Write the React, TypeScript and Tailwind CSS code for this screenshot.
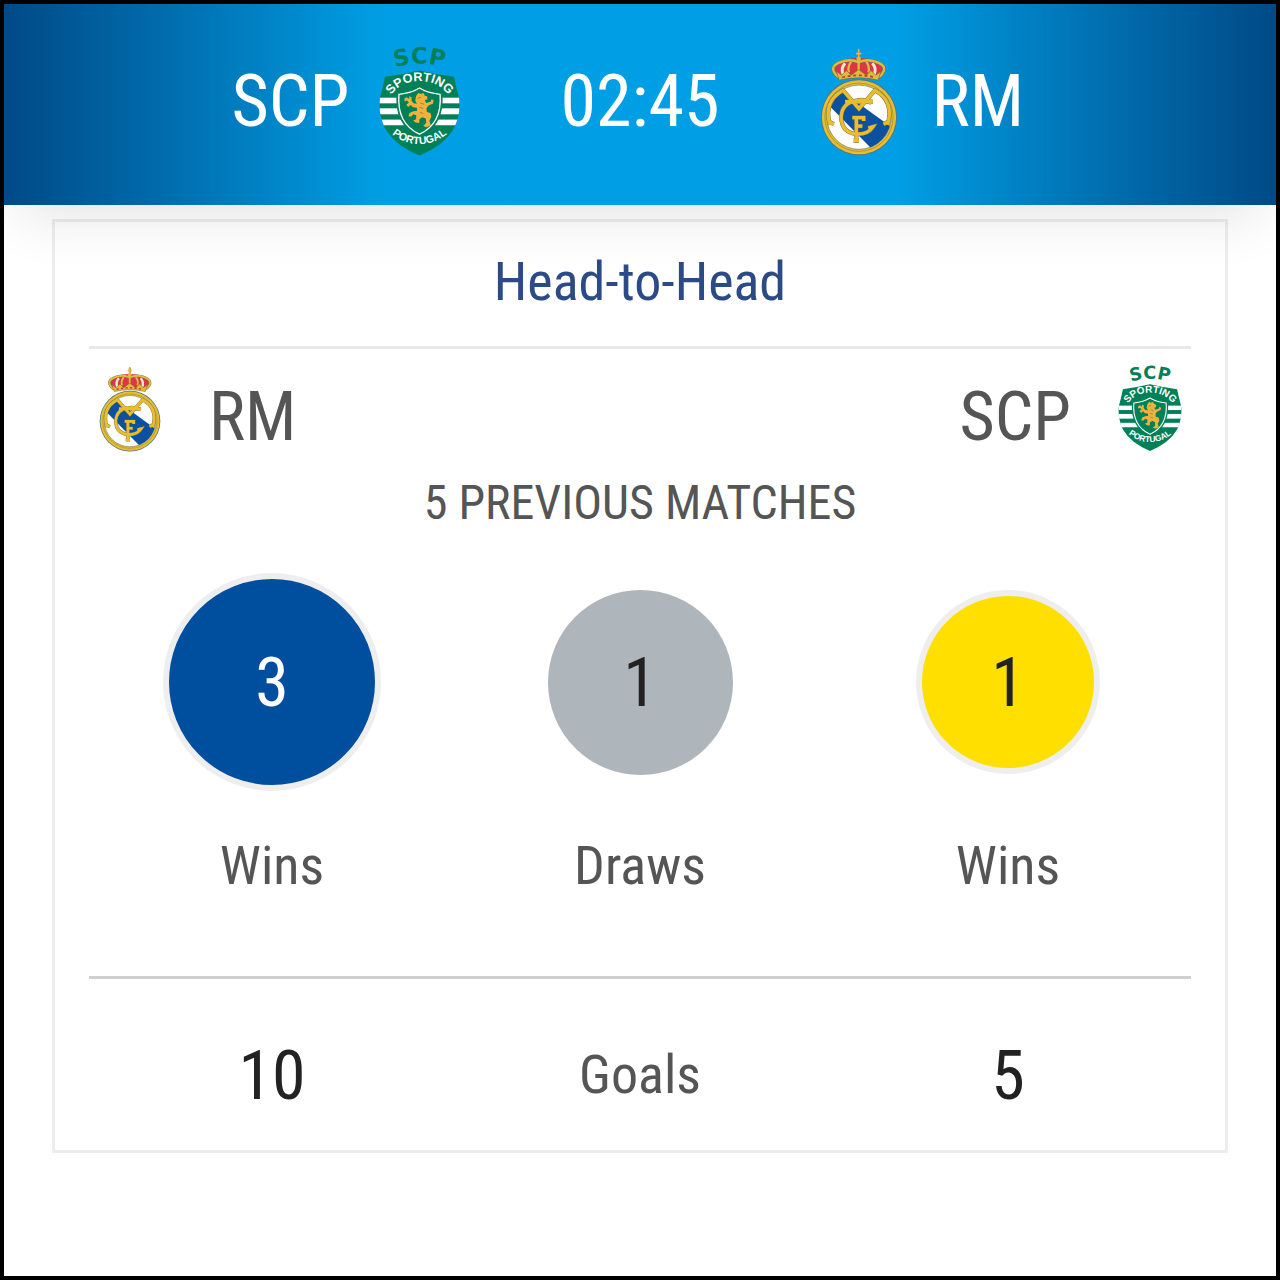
import React, { useId } from "react";

type CrestProps = {
  className?: string;
};

const SportingCrest = ({ className }: CrestProps) => {
  const id = useId();
  const shield =
    "M46 109 Q98 102 150 90 Q202 102 254 109 Q260 140 269 172 Q276 218 254 264 Q224 316 150 346 Q76 316 46 264 Q24 218 31 172 Q40 140 46 109 Z";

  return (
    <svg viewBox="25 20 250 330" className={`overflow-visible ${className}`} role="img" aria-label="Sporting CP">
      <defs>
        <clipPath id={`${id}-shield`}>
          <path d={shield} />
        </clipPath>
        <path id={`${id}-top`} d="M56 88 Q150 50 244 88" />
        <path id={`${id}-name`} d="M56 178 Q86 122 150 122 Q214 122 246 178" />
        <path id={`${id}-country`} d="M56 272 Q100 312 150 312 Q200 312 244 272" />
      </defs>
      <text fill="#008057" fontFamily="DejaVu Sans" fontWeight="700" fontSize="68" textAnchor="middle">
        <textPath href={`#${id}-top`} startOffset="50%">SCP</textPath>
      </text>
      <path d={shield} fill="#008057" />
      <g clipPath={`url(#${id}-shield)`} fill="#fff">
        <rect x="20" y="172" width="260" height="17" />
        <rect x="20" y="204" width="260" height="18" />
        <rect x="20" y="238" width="260" height="17" />
      </g>
      <path
        d="M86 160 Q126 156 150 141 Q174 156 214 160 Q222 252 150 286 Q78 252 86 160 Z"
        fill="#008057"
        stroke="#008057"
        strokeWidth="10"
      />
      <path
        d="M88 162 Q126 158 150 143 Q174 158 212 162 Q219 250 150 282 Q81 250 88 162 Z"
        fill="#008057"
        stroke="#fff"
        strokeWidth="4"
      />
      {/* lion */}
      <path
        d="M140 166 L147 157 L153 161 L162 158 L166 166 L173 168 L174 177 L166 180 L170 188 L183 184 L187 176 L193 181 L190 190 L178 195 L171 203 L172 215 L183 218 L186 229 L180 242 L184 255 L172 261 L161 257 L170 248 L169 235 L159 231 L150 236 L149 248 L138 247 L131 241 L140 237 L140 225 L131 222 L126 229 L117 229 L119 219 L131 213 L143 211 L142 202 L130 201 L124 194 L116 200 L110 193 L118 187 L112 180 L106 184 L104 175 L111 171 L119 176 L119 168 L126 171 L126 181 L132 189 L142 190 L137 180 Z"
        fill="#efb23f"
      />
      <path d="M145 174 l9 -3 M152 188 l12 4 M150 201 l11 4 M151 216 l11 4" stroke="#8a8f2f" strokeWidth="3" fill="none" />
      <g fill="#fff" fontFamily="Liberation Sans" fontWeight="700" textAnchor="middle">
        <text fontSize="38">
          <textPath href={`#${id}-name`} startOffset="50%">SPORTING</textPath>
        </text>
        <text fontSize="32">
          <textPath href={`#${id}-country`} startOffset="50%">PORTUGAL</textPath>
        </text>
      </g>
    </svg>
  );
};

const MadridCrest = ({ className }: CrestProps) => {
  const id = useId();
  const monogram = (
    <>
      <path d="M62 256 Q42 184 102 152 L150 207 L198 152 Q258 184 236 256" />
      <path d="M74 254 L58 246 M224 254 L240 246" />
      <path d="M108 186 H192" />
      <path d="M188 190 Q170 178 146 182 Q98 188 96 233 Q98 281 146 284 Q178 284 192 262 L178 266" />
      <path d="M142 232 V304 M130 234 H164 V244 M142 260 H160 M134 304 H150" />
    </>
  );

  return (
    <svg viewBox="30 24 240 326" className={className} role="img" aria-label="Real Madrid">
      <defs>
        <clipPath id={`${id}-disc`}>
          <circle cx="150" cy="233" r="97" />
        </clipPath>
      </defs>
      {/* crown */}
      <path d="M88 112 Q60 86 88 70 Q112 54 149 54 Q186 54 210 70 Q238 86 210 112 Z" fill="#d93648" />
      <path d="M108 70 Q94 84 102 104 M190 70 Q204 84 196 104" stroke="#f4e9cf" strokeWidth="9" fill="none" />
      <g fill="none" stroke="#6d735a" strokeWidth="10">
        <path d="M88 112 Q56 84 88 69 Q120 54 149 67 Q178 54 210 69 Q242 84 210 112" />
        <path d="M149 30 V66" strokeWidth="7" />
      </g>
      <g fill="none" stroke="#e3b93c" strokeWidth="7">
        <path d="M88 112 Q56 84 88 69 Q120 54 149 67 Q178 54 210 69 Q242 84 210 112" />
        <path d="M149 60 V96 M126 66 Q114 82 120 98 M172 66 Q184 82 178 98" />
        <path d="M149 28 V60 M141 41 H157" strokeWidth="5" />
      </g>
      <circle cx="149" cy="57" r="7" fill="#e3b93c" />
      <g fill="#e3b93c" stroke="#7c6a2c" strokeWidth="2">
        <path d="M82 94 L97 106 L112 92 L126 106 L149 89 L172 106 L186 92 L201 106 L216 94 L208 121 Q149 107 90 121 Z" />
      </g>
      <path d="M99 113 Q149 100 199 113" fill="none" stroke="#c43a3a" strokeWidth="5" strokeDasharray="9 8" />

      {/* ring and sash */}
      <circle cx="150" cy="233" r="115" fill="#4d7890" />
      <circle cx="150" cy="233" r="112" fill="#e9bd2e" />
      <circle cx="150" cy="233" r="103" fill="none" stroke="#8d843f" strokeWidth="2" />
      <circle cx="150" cy="233" r="97" fill="#fff" stroke="#6b7656" strokeWidth="2" />
      <g clipPath={`url(#${id}-disc)`}>
        <path d="M58 196 L100 156 L252 266 L194 334 Z" fill="#0c50a0" />
      </g>

      <g fill="none" stroke="#7c7949" strokeWidth="13">{monogram}</g>
      <g fill="none" stroke="#e9bd2e" strokeWidth="10">{monogram}</g>
    </svg>
  );
};

const stats = [
  { label: "Wins", value: 3, circle: "size-[218px] border-[6px] border-[#eeeeef] bg-[#004f9f] text-white" },
  { label: "Draws", value: 1, circle: "size-[185px] bg-[#aeb5bb] text-[#222]" },
  { label: "Wins", value: 1, circle: "size-[184px] border-[6px] border-[#eeeeef] bg-[#ffdf00] text-[#222]" },
];

const App = () => {
  return (
    <div className="min-h-screen border-4 border-black bg-white font-['Roboto_Condensed','Liberation_Sans_Narrow',Roboto,sans-serif] text-[#555]">
      {/* Score bar */}
      <header className="relative grid grid-cols-[1fr_auto_1fr] items-center gap-[100px] h-[201px] pb-1.5 bg-linear-to-r from-[#004a86] via-[#009fe5] via-30% to-[#009fe5] to-70% shadow-[0_28px_56px_-16px_rgba(0,0,0,0.11)] text-[72px] leading-none text-white">
        <div className="absolute inset-y-0 right-0 w-[30%] bg-linear-to-l from-[#004a86] to-[#009fe5]"></div>
        <div className="relative flex items-center justify-end gap-7">
          <span>SCP</span>
          <SportingCrest className="w-[83px] h-[110px]" />
        </div>
        <time className="relative">02:45</time>
        <div className="relative flex items-center gap-8">
          <MadridCrest className="w-20 h-[108px]" />
          <span>RM</span>
        </div>
      </header>

      {/* Head-to-head card */}
      <main className="mx-12 mt-3.5 border-[3px] border-[#ededee] px-[34px]">
        <h1 className="border-b-[3px] border-[#e9e9ea] pt-7 pb-8 text-center text-[54px] leading-[64px] text-[#2b4a86]">
          Head-to-Head
        </h1>

        <div className="flex items-center justify-between px-2 pt-4 text-[68px] leading-[72px]">
          <div className="flex items-center gap-[46px]">
            <MadridCrest className="w-[66px] h-[86px]" />
            <span className="pt-4">RM</span>
          </div>
          <div className="flex items-center gap-[46px]">
            <span className="pt-4">SCP</span>
            <SportingCrest className="w-[66px] h-[86px]" />
          </div>
        </div>

        <h2 className="mt-[18px] text-center text-5xl leading-[64px]">5 PREVIOUS MATCHES</h2>

        <div className="mt-[38px] grid grid-cols-3 gap-x-0.5 border-b-[3px] border-[#cfcfd0] pb-[78px]">
          {stats.map((stat, index) => (
            <div key={index} className="flex flex-col items-center">
              <div className="flex h-[218px] items-center">
                <div className={`flex items-center justify-center rounded-full pt-0.5 text-[68px] leading-none ${stat.circle}`}>
                  {stat.value}
                </div>
              </div>
              <div className="mt-[43px] text-[54px] leading-[64px]">{stat.label}</div>
            </div>
          ))}
        </div>

        <div className="grid grid-cols-3 items-start gap-x-0.5 pt-15 pb-9 text-center">
          <span className="text-[68px] leading-[75px] text-[#222]">10</span>
          <span className="text-[54px] leading-[72px]">Goals</span>
          <span className="text-[68px] leading-[75px] text-[#222]">5</span>
        </div>
      </main>
    </div>
  );
};

export default App;
